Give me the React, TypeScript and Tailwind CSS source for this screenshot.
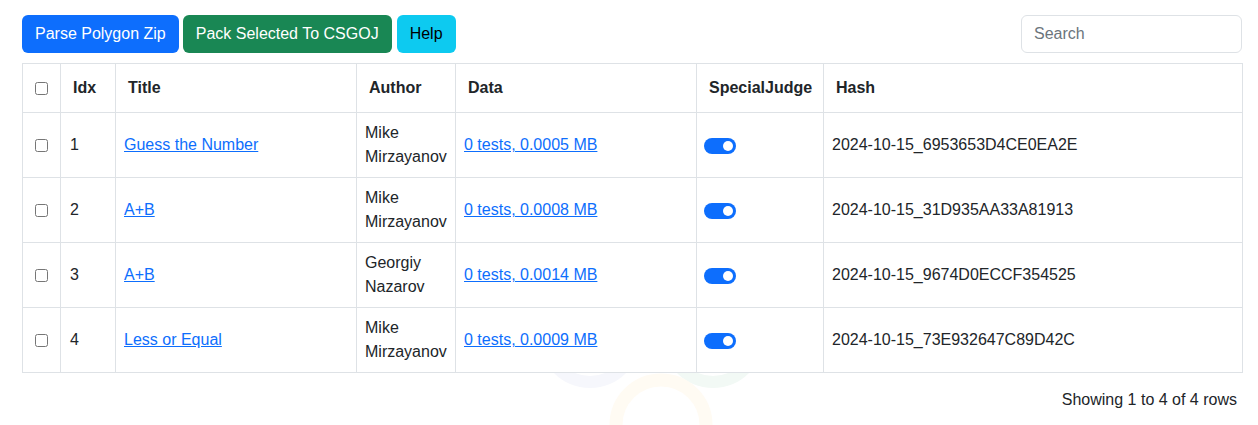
import React from "react";

const rows = [
  { idx: 1, title: "Guess the Number", author: ["Mike", "Mirzayanov"], data: "0 tests, 0.0005 MB", hash: "2024-10-15_6953653D4CE0EA2E" },
  { idx: 2, title: "A+B", author: ["Mike", "Mirzayanov"], data: "0 tests, 0.0008 MB", hash: "2024-10-15_31D935AA33A81913" },
  { idx: 3, title: "A+B", author: ["Georgiy", "Nazarov"], data: "0 tests, 0.0014 MB", hash: "2024-10-15_9674D0ECCF354525" },
  { idx: 4, title: "Less or Equal", author: ["Mike", "Mirzayanov"], data: "0 tests, 0.0009 MB", hash: "2024-10-15_73E932647C89D42C" },
];

function Toggle() {
  return (
    <span className="inline-flex h-[16px] w-[32px] items-center justify-end rounded-full bg-[#0d6efd] pr-[3px] align-middle">
      <span className="h-[10px] w-[10px] rounded-full bg-white" />
    </span>
  );
}

export default function App() {
  return (
    <div
      className="relative min-h-[425px] w-[1258px] overflow-hidden bg-white pl-[22px] pr-[16px] pt-[15px] text-[16px] leading-[24px] text-[#212529]"
      style={{ fontFamily: '"Liberation Sans", Arial, sans-serif' }}
    >
      <svg className="pointer-events-none absolute left-[520px] top-[270px]" width="260" height="170" viewBox="0 0 260 170">
        <circle cx="70" cy="67" r="45" fill="none" stroke="#f6f7fc" strokeWidth="12" />
        <circle cx="193" cy="67" r="45" fill="none" stroke="#f2f9f5" strokeWidth="12" />
        <circle cx="141" cy="155" r="45" fill="none" stroke="#fffbf3" strokeWidth="13" />
      </svg>
      <div className="relative flex items-start justify-between">
        <div className="flex gap-[4px]">
          <button className="h-[38px] rounded-[6px] bg-[#0d6efd] px-[13px] text-white">Parse Polygon Zip</button>
          <button className="h-[38px] rounded-[6px] bg-[#198754] px-[13px] text-white">Pack Selected To CSGOJ</button>
          <button className="ml-[1px] h-[38px] rounded-[6px] bg-[#0dcaf0] px-[13px] text-black">Help</button>
        </div>
        <input
          placeholder="Search"
          className="h-[38px] w-[221px] rounded-[6px] border border-[#dee2e6] bg-white px-[12px] text-[16px] placeholder:text-[#6c757d] outline-none"
        />
      </div>
      <table className="relative mt-[10px] w-[1220px] table-fixed border-collapse bg-white">
        <colgroup>
          <col className="w-[38px]" />
          <col className="w-[55px]" />
          <col className="w-[241px]" />
          <col className="w-[99px]" />
          <col className="w-[241px]" />
          <col className="w-[127px]" />
          <col className="w-[419px]" />
        </colgroup>
        <thead>
          <tr className="h-[49px]">
            <th className="border border-[#dee2e6] p-0 text-center align-middle">
              <input type="checkbox" className="m-0 align-middle" />
            </th>
            {["Idx", "Title", "Author", "Data", "SpecialJudge", "Hash"].map((h) => (
              <th key={h} className="border border-[#dee2e6] px-[12px] py-0 text-left align-middle font-bold">
                {h}
              </th>
            ))}
          </tr>
        </thead>
        <tbody>
          {rows.map((r) => (
            <tr key={r.idx} className="h-[65px]">
              <td className="border border-[#dee2e6] p-0 text-center align-middle">
                <input type="checkbox" className="m-0 align-middle" />
              </td>
              <td className="border border-[#dee2e6] px-[9px] align-middle">{r.idx}</td>
              <td className="border border-[#dee2e6] px-[8px] align-middle">
                <a href="#" className="text-[#0d6efd] underline">{r.title}</a>
              </td>
              <td className="border border-[#dee2e6] px-[8px] py-[8px] align-middle whitespace-nowrap">
                {r.author[0]}
                <br />
                {r.author[1]}
              </td>
              <td className="border border-[#dee2e6] px-[8px] align-middle">
                <a href="#" className="text-[#0d6efd] underline">{r.data}</a>
              </td>
              <td className="border border-[#dee2e6] pl-[7px] pr-[8px] align-middle">
                <Toggle />
              </td>
              <td className="border border-[#dee2e6] px-[8px] align-middle">{r.hash}</td>
            </tr>
          ))}
        </tbody>
      </table>
      <div className="relative mt-[10px] flex h-[34px] items-center justify-end pr-[5px]">
        Showing 1 to 4 of 4 rows
      </div>
    </div>
  );
}
